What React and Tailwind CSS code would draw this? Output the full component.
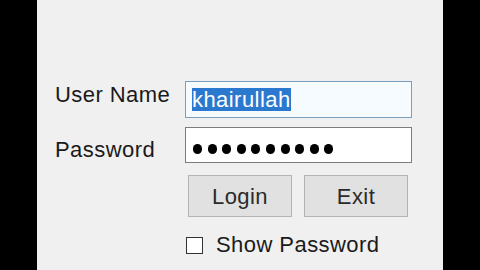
export default function App() {
  return (
    <div className="flex h-[270px] w-[480px] bg-black font-['Liberation_Sans',Arial,sans-serif] text-[22px] tracking-[0.02em] text-[#1a1a1a]">
      <div className="ml-[37px] h-full w-[406px] bg-[#f0f0f0] pl-[18px] pt-[81px]">
        <div className="flex items-start">
          <div className="w-[130px] pt-[2px] leading-[24px]">User Name</div>
          <div className="flex h-[37px] w-[227px] items-center border border-[#7a9ebd] bg-[#f6fbff] pl-[6px]">
            <span className="bg-[#2b79cf] leading-[23px] text-white">khairullah</span>
          </div>
        </div>

        <div className="mt-[9px] flex items-start">
          <div className="w-[130px] pt-[11px] leading-[24px]">Password</div>
          <div className="flex h-[36px] w-[227px] gap-[5.6px] border border-[#7d7d7d] bg-white pl-[7px] pt-[16px]">
            {Array.from({ length: 10 }).map((_, i) => (
              <span key={i} className="h-[10px] w-[9px] rounded-full bg-black" />
            ))}
          </div>
        </div>

        <div className="ml-[133px] mt-[12px] flex gap-[12px]">
          <button className="h-[42px] w-[104px] border border-[#b4b4b4] bg-[#e1e1e1] text-[#2a2a2a]">Login</button>
          <button className="h-[42px] w-[104px] border border-[#b4b4b4] bg-[#e1e1e1] text-[#2a2a2a]">Exit</button>
        </div>

        <div className="ml-[131px] mt-[16px] flex items-center gap-[13px]">
          <span className="h-[17px] w-[17px] border border-[#333333] bg-white" />
          <span className="leading-[24px]">Show Password</span>
        </div>
      </div>
    </div>
  )
}
